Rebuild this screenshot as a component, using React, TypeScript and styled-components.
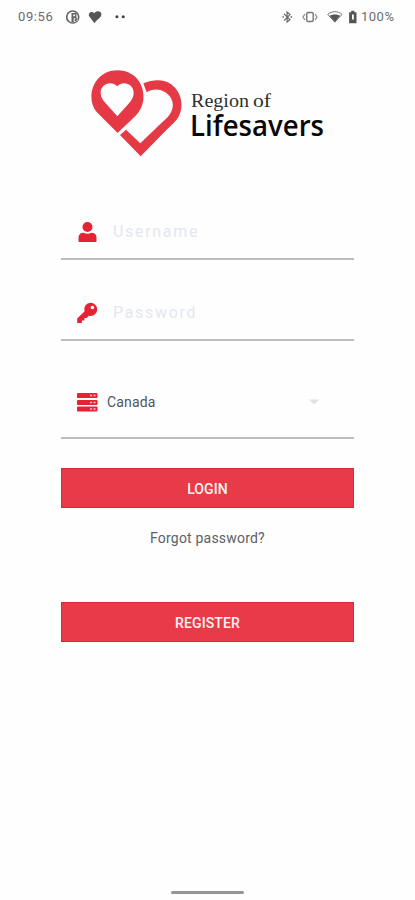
import React from "react";
import styled, { createGlobalStyle } from "styled-components";

const GlobalStyle = createGlobalStyle`
  * { box-sizing: border-box; }
  body { margin: 0; background: #fefefe; font-family: Roboto, sans-serif; }
`;

const Screen = styled.main`
  width: 415px;
  height: 900px;
  display: flex;
  flex-direction: column;
  align-items: center;
  overflow: hidden;
  background: #fefefe;
`;

const StatusBar = styled.header`
  width: 100%;
  height: 34px;
  flex: none;
  display: flex;
  align-items: center;
  justify-content: space-between;
  padding: 0 20px 0 18px;
  color: #6b6b6b;
  font-size: 13px;
  line-height: 34px;
`;

const StatusGroup = styled.div`
  display: flex;
  align-items: center;
  height: 34px;
  svg { display: block; flex: none; }
`;

const StatusText = styled.span<{ $width: number; $spacing: number }>`
  width: ${(p) => p.$width}px;
  letter-spacing: ${(p) => p.$spacing}px;
  white-space: nowrap;
`;

const Logo = styled.svg`
  display: block;
  width: 244px;
  height: 100px;
  margin: 28px 1px 0 0;
  flex: none;
`;

const Form = styled.form`
  width: 293px;
  display: flex;
  flex-direction: column;
  margin-top: 41px;
`;

const Field = styled.label<{ $height: number; $gap: number; $top?: number; $drop?: number }>`
  height: ${(p) => p.$height}px;
  margin-top: ${(p) => p.$top ?? 0}px;
  padding: ${(p) => p.$drop ?? 0}px 33px 0 15px;
  display: flex;
  align-items: center;
  gap: ${(p) => p.$gap}px;
  border-bottom: 2px solid #bcbebe;
  svg { display: block; flex: none; }
`;

const Input = styled.input`
  width: 200px;
  height: 24px;
  padding: 0;
  border: 0;
  outline: 0;
  background: transparent;
  font: 400 16px/24px Roboto, sans-serif;
  letter-spacing: 1.7px;
  color: #4b5157;
  &::placeholder { color: #e3e7ef; opacity: 1; }
`;

const Region = styled.span`
  flex: 1;
  color: #50565d;
  font-size: 14px;
  line-height: 20px;
  letter-spacing: 0.15px;
`;

const Button = styled.button<{ $top: number }>`
  width: 293px;
  height: 40px;
  margin: ${(p) => p.$top}px 0 0;
  padding: 2px 0 0;
  border: 1px solid #e22638;
  background: #e73c48;
  color: #fff4f4;
  font: 500 14px/20px Roboto, sans-serif;
  letter-spacing: 0.1px;
`;

const Forgot = styled.a`
  margin-top: 20px;
  color: #5b6066;
  font-size: 14px;
  line-height: 20px;
  letter-spacing: 0.2px;
  text-align: center;
`;

const HomeIndicator = styled.div`
  width: 73px;
  height: 3px;
  margin: auto 0 6px;
  border-radius: 2px;
  background: #969696;
`;

const LeftIcons = () => (
  <svg width="64" height="18" viewBox="0 0 64 18">
    <circle cx="7.7" cy="9" r="6" fill="#fff" stroke="#656565" strokeWidth="1.7" />
    <path d="M6.5 5h5v5H8.7v4H6.5Z" fill="#656565" />
    <path d="M8.3 6.5h1.8v1.8H8.3ZM9.8 10h3v2.4l-3 1.6Z" fill="#fff" />
    <path d="M9.7 10.2h3l-.5 2-2.5 1.6Z" fill="#656565" />
    <path d="M29.5 15.2 24.3 8.4C22.5 5.4 26.2 2 29.3 5.2c2.4-3 6.8-2 7.1.8.2 3.7-4.3 5.2-6.9 9.2Z" fill="#555" />
    <circle cx="51.9" cy="8.7" r="1.55" fill="#444" />
    <circle cx="58.2" cy="8.7" r="1.55" fill="#444" />
  </svg>
);

const RightIcons = () => (
  <svg width="80" height="18" viewBox="0 0 80 18">
    <path d="m3 5.8 6 6L6.1 14V4L9 6.6l-6 6" fill="none" stroke="#666" strokeWidth="1.2" />
    <path d="M1.5 9h1.4M9.5 9h1.6" stroke="#666" strokeWidth="1.5" />
    <rect x="25.7" y="4.5" width="6.5" height="9" rx="1.5" fill="none" stroke="#777" strokeWidth="1.4" />
    <path d="m24 6-2 3 2 3M34 6l2 3-2 3" fill="none" stroke="#888" strokeWidth="1.2" />
    <path d="M46.7 6.4C50.7 2.8 57 2.8 61 6.4l-7.2 7.8Z" fill="#fff" stroke="#777" />
    <path d="M48.6 7.8c3-1.8 7.5-1.8 10.5 0l-5.3 6.2Z" fill="#555" />
    <path d="M70.2 2.8h3.2v1.5h2.1v11h-7.4v-11h2.1Z" fill="#555" />
    <path d="M71 6.5h1.8v5H71Z" fill="#fff" />
  </svg>
);

const Brand = () => (
  <Logo viewBox="0 0 244 100" role="img" aria-label="Region of Lifesavers">
    <g transform="scale(.333333)" fill="#e63946">
      <path fillRule="evenodd" d="M98 213 38 153C-3 110 26 25 97 25c71 0 98 77 64 125-9 14-43 42-63 63ZM97 163l35-39c10-12 14-20 14-31 0-29-33-38-49-20-17-18-50-9-50 20 0 11 5 20 15 31Z" />
      <path d="m175 64 10 27c43-29 101 20 70 65-7 11-20 21-33 34l-56 54-43-41-18 16 62 64 66-68c16-16 33-30 43-43 38-52-6-148-101-108Z" />
    </g>
    <text x="106" y="44.5" fontFamily="'Liberation Serif', serif" fontSize="19.5" fill="#303030" textLength="58" lengthAdjust="spacingAndGlyphs">Region</text>
    <text x="168" y="44.5" fontFamily="'Liberation Serif', serif" fontSize="19.5" fill="#303030" textLength="18" lengthAdjust="spacingAndGlyphs">of</text>
    <text x="105" y="74" fontFamily="'Open Sans', sans-serif" fontWeight="600" fontSize="28.5" fill="#080808" textLength="134" lengthAdjust="spacingAndGlyphs">Lifesavers</text>
  </Logo>
);

const UserIcon = () => (
  <svg width="22" height="22" viewBox="0 0 22 22" fill="#e52334">
    <circle cx="11.5" cy="6" r="5" />
    <path d="M2.5 20v-3.5c0-3 2-4.7 5-4.7 2.5 1.3 5.4 1.3 8 0 3 0 5 1.7 5 4.7V20c0 .7-.3 1-1 1h-16c-.7 0-1-.3-1-1Z" />
  </svg>
);

const KeyIcon = () => (
  <svg width="22" height="22" viewBox="0 0 22 22">
    <path fill="#e52334" fillRule="evenodd" d="M14.6.8a6.6 6.6 0 0 0-6.1 8.7L1.2 16.6v4.5h4.7v-2.6h2.5V16h2.4l1.8-2.3c.7.2 1.3.3 2 .3A6.6 6.6 0 1 0 14.6.8Zm1.8 2.9a1.8 1.8 0 1 1 0 3.6 1.8 1.8 0 0 1 0-3.6Z" />
  </svg>
);

const ServerIcon = () => (
  <svg width="22" height="22" viewBox="0 0 22 22">
    {[2, 9, 15.5].map((y) => (
      <g key={y}>
        <rect x="1" y={y} width="20.5" height="5" rx=".8" fill="#e52334" />
        <path d={`M14 ${y + 2.5}h2m1.5 0h2`} stroke="#ffc5c9" strokeWidth="1.3" />
      </g>
    ))}
  </svg>
);

export default function App() {
  return (
    <>
      <GlobalStyle />
      <Screen>
        <StatusBar>
          <StatusGroup>
            <StatusText $width={47} $spacing={0.6}>09:56</StatusText>
            <LeftIcons />
          </StatusGroup>
          <StatusGroup>
            <RightIcons />
            <StatusText $width={34} $spacing={0.5}>100%</StatusText>
          </StatusGroup>
        </StatusBar>
        <Brand />
        <Form onSubmit={(event) => event.preventDefault()}>
          <Field $height={57} $gap={15} $drop={2}>
            <UserIcon />
            <Input placeholder="Username" aria-label="Username" />
          </Field>
          <Field $height={57} $gap={15} $top={24} $drop={2}>
            <KeyIcon />
            <Input type="password" placeholder="Password" aria-label="Password" />
          </Field>
          <Field as="div" $height={76} $gap={9} $top={22} $drop={4}>
            <ServerIcon />
            <Region>Canada</Region>
            <svg width="14" height="8" viewBox="0 0 14 8">
              <path d="M2 1.5h10l-5 5Z" fill="#dce2e6" />
            </svg>
          </Field>
          <Button $top={29}>LOGIN</Button>
          <Forgot>Forgot password?</Forgot>
          <Button $top={54} type="button">REGISTER</Button>
        </Form>
        <HomeIndicator />
      </Screen>
    </>
  );
}
